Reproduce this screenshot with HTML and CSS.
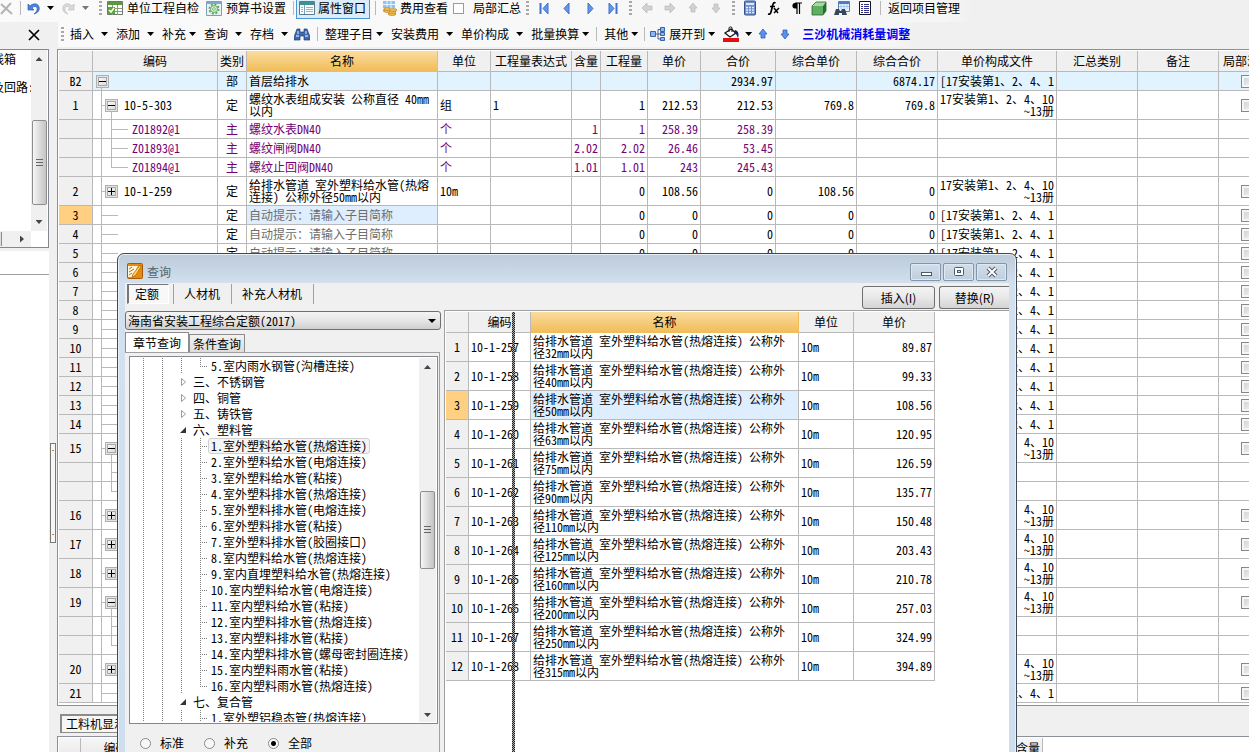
FILE: index.html
```html
<!DOCTYPE html>
<html lang="zh-CN">
<head>
<meta charset="utf-8">
<title>查询</title>
<link rel="stylesheet" href="styles.css">
</head>
<body>
<div class="app">
  <header class="topbar">
    <div class="toolbar">
      <button class="ib cut-left" aria-label="删除"><svg width="13" height="16" viewBox="0 0 13 16"><path d="M1 4 12 14M11 3 1 14" stroke="#b4b4b4" stroke-width="2" fill="none"/></svg></button>
      <i class="sep"></i>
      <button class="ib" aria-label="撤销"><svg width="16" height="16" viewBox="0 0 16 16"><path d="M2 4v6h6L6 8c3-3 6-1 5 2-.5 2-2 3-3 4 4-1 6-4 5-7-1-4-6-4-9-1z" fill="#4a82e0" stroke="#2c5cb8" stroke-width=".7"/></svg></button>
      <i class="arrow undo-arrow"></i>
      <button class="ib" aria-label="恢复"><svg width="16" height="16" viewBox="0 0 16 16"><path d="M14 4v6H8l2-2C7 5 4 7 5 10c.5 2 2 3 3 4-4-1-6-4-5-7 1-4 6-4 9-1z" fill="#dadada" stroke="#bdbdbd" stroke-width=".7"/></svg></button>
      <i class="arrow undo-arrow pale"></i>
      <i class="grip"></i>
      <button class="tb"><svg width="16" height="16" viewBox="0 0 16 16"><path d="M.5 1.500h15v13H.5z" fill="#fff" stroke="#6b7b6b"/><path d="M1 2h14v3H1z" fill="#5b9a3c"/><path d="M1 8.500h14M1 11.500h14M5.500 5v10M10.500 5v10" stroke="#8a9a8a"/><path d="M1 7h7v7H1z" fill="#58a530"/><path d="m2 10 2 2 3-4" stroke="#fff" stroke-width="1.600" fill="none"/></svg>单位工程自检</button>
      <button class="tb"><svg width="16" height="16" viewBox="0 0 16 16"><path d="M.5 1.500h15v14H.5z" fill="#e9f1f6" stroke="#7f9fb6"/><path d="M1 2h14v2H1z" fill="#7fa9d4"/><circle cx="8" cy="9" r="4.500" fill="none" stroke="#58a858" stroke-width="2" stroke-dasharray="2 1.500"/><circle cx="8" cy="9" r="3.500" fill="#d6ecd2" stroke="#6fb06f"/><circle cx="8" cy="9" r="1.300" fill="#fff" stroke="#4f9b4f" stroke-width=".7"/></svg>预算书设置</button>
      <i class="sep near"></i>
      <button class="tb active"><svg width="16" height="16" viewBox="0 0 16 16"><path d="M.5 1.500h15v13H.5z" fill="#f8fcff" stroke="#5b7c8c"/><path d="M1 2h14v3H1z" fill="#3f8f93"/><path d="M5.500 5v9" stroke="#7aa0b8"/><path d="M2 7.500h2M2 9.500h2M2 11.500h2M7 7.500h7M7 9.500h7M7 11.500h7" stroke="#84b5d4"/></svg>属性窗口</button>
      <i class="sep after"></i>
      <button class="tb fee"><svg width="16" height="16" viewBox="0 0 16 16"><path d="M1 1h12v11H1z" fill="#8cc4ee"/><path d="M1 4.500h12M1 8.500h12M5 1v11M9 1v11" stroke="#e8f5ff"/><g fill="#f0bb52" stroke="#b97e22" stroke-width=".6"><ellipse cx="10" cy="14" rx="4" ry="1.500"/><ellipse cx="10" cy="12" rx="4" ry="1.500"/><ellipse cx="11" cy="10" rx="4" ry="1.500"/><ellipse cx="5" cy="11" rx="3" ry="1.500"/><ellipse cx="5" cy="9" rx="3" ry="1.500"/></g></svg>费用查看</button>
      <label class="tcheck"><input type="checkbox">局部汇总</label>
      <i class="grip"></i>
      <button class="ib n1" aria-label="首条"><svg width="14" height="16" viewBox="0 0 14 16"><path d="M3.500 3v11" stroke="#3f72cf" stroke-width="2"/><path d="M11 3v11L6 8.500z" fill="#6496ea" stroke="#3f72cf"/></svg></button>
      <button class="ib n1" aria-label="上一条"><svg width="14" height="16" viewBox="0 0 14 16"><path d="M9 3v11L4 8.500z" fill="#6496ea" stroke="#3f72cf"/></svg></button>
      <button class="ib n1" aria-label="下一条"><svg width="14" height="16" viewBox="0 0 14 16"><path d="M5 3v11l5-5.500z" fill="#6496ea" stroke="#3f72cf"/></svg></button>
      <button class="ib n1" aria-label="末条"><svg width="14" height="16" viewBox="0 0 14 16"><path d="M10.500 3v11" stroke="#3f72cf" stroke-width="2"/><path d="M3 3v11l5-5.500z" fill="#6496ea" stroke="#3f72cf"/></svg></button>
      <i class="grip"></i>
      <button class="ib n1" aria-label="左移"><svg width="14" height="16" viewBox="0 0 14 16"><path d="m2 8 5-5v3h5v4H7v3z" fill="#d2d2d2" stroke="#b8b8b8" stroke-width=".7"/></svg></button>
      <button class="ib n1" aria-label="右移"><svg width="14" height="16" viewBox="0 0 14 16"><path d="M12 8 7 3v3H2v4h5v3z" fill="#d2d2d2" stroke="#b8b8b8" stroke-width=".7"/></svg></button>
      <button class="ib n1" aria-label="上移"><svg width="14" height="16" viewBox="0 0 14 16"><path d="m7 3 4 5H9v4H5V8H3z" fill="#d2d2d2" stroke="#b8b8b8" stroke-width=".7"/></svg></button>
      <button class="ib n1" aria-label="下移"><svg width="14" height="16" viewBox="0 0 14 16"><path d="m7 13 4-5H9V4H5v4H3z" fill="#d2d2d2" stroke="#b8b8b8" stroke-width=".7"/></svg></button>
      <i class="grip"></i>
      <button class="ib n1" aria-label="计算器"><svg width="14" height="16" viewBox="0 0 14 16"><rect x="1.500" y="1" width="11" height="14" rx="1" fill="#6f8fd0" stroke="#37528e"/><path d="M3 3h8v2H3z" fill="#dbe8fb"/><path d="M3 7.500h8M3 10h8M3 12.500h8" stroke="#e4ecfa" stroke-width="1.500" stroke-dasharray="2 1"/></svg></button>
      <button class="ib n1" aria-label="函数"><svg width="14" height="16" viewBox="0 0 14 16"><path d="M9.500 3C7.500 2 7 4 6.500 6L5 12c-.5 2-1.500 2.500-3 2M4 6.500h5" stroke="#000" stroke-width="1.700" fill="none"/><path d="m8 8 4 5M13 8l-5 5" stroke="#000" stroke-width="1.500"/></svg></button>
      <button class="ib n1" aria-label="段落"><svg width="14" height="16" viewBox="0 0 14 16"><path d="M8 3v11M10.500 3v11M6 3h7" stroke="#000" stroke-width="1.200"/><path d="M8 3H6C2.500 3 2.500 8.500 6 8.500h2z"/></svg></button>
      <button class="ib n1" aria-label="模型"><svg width="16" height="16" viewBox="0 0 16 16"><path d="M1 6 5 2h10l-3 4z" fill="#a4dba0"/><path d="M1 6h11v9H1z" fill="#5fae62"/><path d="m12 6 3-4v9l-3 4z" fill="#276e2c"/><path d="M1 6 5 2h10v9l-3 4H1z" fill="none" stroke="#286b2d" stroke-width=".8"/></svg></button>
      <button class="ib n1" aria-label="查找"><svg width="16" height="16" viewBox="0 0 16 16"><path d="M4.500 1.500h11v10h-11z" fill="#eaf3ff" stroke="#5c7cab"/><path d="M5 2h10v2H5z" fill="#4d7ac4"/><path d="M7 4v5M10 4v5M13 4v5M5 6.500h10" stroke="#a9c4e8"/><path d="m0 15 2-6h3l1 2h1l1-2h3l2 6H8v-2H5v2z" fill="#37465e"/></svg></button>
      <button class="ib n1" aria-label="报表"><svg width="14" height="16" viewBox="0 0 14 16"><path d="M1.500 1.500h11v13h-11z" fill="#fff" stroke="#112"/><path d="M3 4.500h2M3 6.500h2M3 8.500h2M3 10.500h2M3 12.500h2M6 4.500h5M6 6.500h5M6 8.500h5M6 10.500h5M6 12.500h5" stroke="#2f2f8a"/></svg></button>
      <i class="sep near2"></i>
      <button class="tb">返回项目管理</button>
    </div>
    <div class="second">
      <div class="panel-close"><button class="ib" aria-label="关闭"><svg width="12" height="12" viewBox="0 0 12 12"><path d="m1 1 10 10M11 1 1 11" stroke="#000" stroke-width="1.700"/></svg></button></div>
      <div class="toolbar menu">
        <i class="grip"></i>
        <button class="mb">插入<i class="arrow"></i></button>
        <button class="mb">添加<i class="arrow"></i></button>
        <button class="mb tight">补充<i class="arrow"></i></button>
        <button class="mb">查询<i class="arrow"></i></button>
        <button class="mb archive">存档<i class="arrow"></i></button>
        <button class="ib" aria-label="查找"><svg width="16" height="16" viewBox="0 0 16 16"><path d="M3 3h3v3h4V3h3l3 8v3h-6v-4H6v4H0v-3z" fill="#3f68ad" stroke="#1f3d75" stroke-width=".7"/><path d="M2 10h3M11 10h3M4 5v3M12 5v3" stroke="#b8d0f4" stroke-width="1.300"/></svg></button>
        <i class="sep"></i>
        <button class="mb tight">整理子目<i class="arrow"></i></button>
        <button class="mb">安装费用<i class="arrow"></i></button>
        <button class="mb">单价构成<i class="arrow"></i></button>
        <button class="mb tight last">批量换算<i class="arrow"></i></button>
        <i class="sep"></i>
        <button class="mb tight last">其他<i class="arrow"></i></button>
        <i class="sep slim"></i>
        <button class="mb tight"><svg width="16" height="16" viewBox="0 0 16 16"><path d="M6 8h4M8 8V3.500h2M8 8v5h2" stroke="#445f8c" fill="none"/><path d="M.5 5.500h5v5h-5zM10.500 1.500h4v4h-4zM10.500 6.500h4v3h-4zM10.500 11.500h4v3h-4z" fill="#8fb4ee" stroke="#3862a6"/></svg><span>展开到</span><i class="arrow"></i></button>
        <button class="mb paint" aria-label="填充颜色"><svg width="16" height="16" viewBox="0 0 16 16"><path d="m2 7 6-4 5 4-6 4z" fill="#fff" stroke="#111" stroke-width="1.300"/><path d="M6 6V2c0-1.500 3-1.500 3 0v4" fill="none" stroke="#111"/><path d="M12 4c4 1 4 5 3 8-1-2-1-4-4-5z" fill="#101f6b"/><path d="M0 12h16v4H0z" fill="#e01010"/></svg><i class="arrow"></i></button>
        <button class="ib up" aria-label="上移"><svg width="10" height="12" viewBox="0 0 10 12"><path d="m5 1 4 5H7v4H3V6H1z" fill="#5a92ea" stroke="#2a5fc0" stroke-width=".8"/></svg></button>
        <button class="ib up" aria-label="下移"><svg width="10" height="12" viewBox="0 0 10 12"><path d="m5 11 4-5H7V2H3v4H1z" fill="#5a92ea" stroke="#2a5fc0" stroke-width=".8"/></svg></button>
        <a class="adjust" href="#">三沙机械消耗量调整</a>
      </div>
    </div>
  </header>
  <div class="work">
    <aside class="side">
      <div class="side-panel">
        <div class="side-row">
          <div class="side-text"><p>线箱</p><p>及回路:</p></div>
          <div class="vbar"><i class="tri up-tri"></i><div class="thumb"></div><i class="tri down-tri"></i></div>
        </div>
        <div class="hbar"><i class="hthumb"></i><i class="tri right-tri"></i></div>
      </div>
      <div class="side-blank"></div>
      <div class="side-rest"></div>
    </aside>
    <div class="splitter"><div class="handle"><span>.</span><span>.</span></div></div>
    <main class="main">
      <div class="grid">
        <table class="sheet" id="sheet">
          <colgroup><col class="w34"><col class="w125"><col class="w29"><col class="w191"><col class="w53"><col class="w81"><col class="w29"><col class="w47"><col class="w53"><col class="w75"><col class="w81"><col class="w81"><col class="w119"><col class="w81"><col class="w81"><col class="w57"></colgroup>
          <thead><tr><th></th><th>编码</th><th>类别</th><th class="hot">名称</th><th>单位</th><th>工程量表达式</th><th>含量</th><th>工程量</th><th>单价</th><th>合价</th><th>综合单价</th><th>综合合价</th><th>单价构成文件</th><th>汇总类别</th><th>备注</th><th>局部汇总</th></tr></thead>
          <tbody></tbody>
        </table>
      </div>
      <div class="bottom-tabs"><button class="btab">工料机显示</button></div>
      <div class="bottom-grid">
        <table class="sheet lower"><thead><tr><th class="w22"></th><th class="w70">编码</th><th></th><th class="w29">含量</th></tr></thead></table>
      </div>
    </main>
  </div>

  <section class="dialog" role="dialog" aria-label="查询">
    <div class="title">
      <svg width="16" height="16" viewBox="0 0 16 16"><rect x=".5" y=".5" width="15" height="15" rx="1" fill="#e88a10" stroke="#a65a08"/><path d="M1 3h10l-2 4 2 2-5 5H1z" fill="#fff8e0"/><path d="m2 6 3-2M2 9l5-3M2 12l3-2" stroke="#c06a10"/><path d="m13 2-7 9-1 3 3-1 6-9z" stroke="#a85a08" stroke-width=".7" fill="#ffd35a"/></svg>
      <span>查询</span>
      <div class="winbtns">
        <button aria-label="最小化"><svg width="14" height="12" viewBox="0 0 14 12"><rect x="2.500" y="6.500" width="10" height="3" fill="#fff" stroke="#4d5a68"/></svg></button>
        <button aria-label="最大化"><svg width="14" height="12" viewBox="0 0 14 12"><rect x="2.500" y="1.500" width="9" height="8" rx="1" fill="#fff" stroke="#4d5a68"/><rect x="5.500" y="4.500" width="3" height="2" fill="#cfdbe8" stroke="#4d5a68"/></svg></button>
        <button aria-label="关闭"><svg width="14" height="12" viewBox="0 0 14 12"><path d="m3 2 8 8M11 2 3 10" stroke="#4d5a68" stroke-width="4"/><path d="m3 2 8 8M11 2 3 10" stroke="#fff" stroke-width="2"/></svg></button>
      </div>
    </div>
    <div class="content">
      <div class="modes">
        <button class="mode pressed">定额</button><button class="mode">人材机</button><button class="mode">补充人材机</button>
        <div class="actions"><button>插入(I)</button><button class="replace">替换(R)</button></div>
      </div>
      <div class="panes">
        <div class="left">
          <select class="combo" aria-label="定额库"><option>海南省安装工程综合定额(2017)</option></select>
          <div class="tabs"><button class="tab on">章节查询</button><button class="tab">条件查询</button></div>
          <div class="tabpane">
            <div class="treebox">
              <ul class="tree" id="tree"></ul>
              <div class="vbar"><i class="tri up-tri"></i><div class="thumb tree-thumb"></div><i class="tri down-tri"></i></div>
            </div>
            <div class="radios">
              <label><input type="radio" name="kind">标准</label>
              <label><input type="radio" name="kind">补充</label>
              <label><input type="radio" name="kind" checked>全部</label>
            </div>
          </div>
        </div>
        <div class="result">
          <table class="sheet quota" id="quota">
            <colgroup><col class="w23"><col class="w62"><col class="w268"><col class="w55"><col class="w81"></colgroup>
            <thead><tr><th></th><th>编码</th><th class="hot">名称</th><th>单位</th><th>单价</th></tr></thead>
            <tbody></tbody>
          </table>
          <div class="drag-line"></div>
        </div>
      </div>
    </div>
  </section>
</div>
<script src="app.js"></script>
</body>
</html>
```
FILE: styles.css
```css
* { box-sizing: border-box; }
html, body { margin: 0; height: 100%; overflow: hidden; }
body, button, input, select {
  font-family: "Noto Sans Mono CJK SC", "Noto Sans CJK SC", sans-serif;
  font-size: 12px;
  line-height: 12px;
  color: #000;
}
button { border: 0; background: none; padding: 0; margin: 0; white-space: nowrap; flex: none; }
.app { position: relative; height: 100vh; overflow: hidden; background: #f0f0f0; display: flex; flex-direction: column; }

/* toolbars */
.topbar { flex: none; }
.toolbar { display: flex; align-items: center; width: max-content; background: linear-gradient(90deg, #fafafa, #f6f6f6 97%, #f0f0f0); white-space: nowrap; }
.topbar > .toolbar { height: 22px; padding: 0 6px 6px 0; }
.second { display: flex; height: 27px; }
.panel-close { width: 58px; padding: 7px 0 0 28px; flex: none; }
.menu { height: 25px; padding: 0 6px 1px 2px; }
.ib { display: inline-flex; align-items: center; justify-content: center; }
.tb { display: inline-flex; align-items: center; gap: 4px; height: 20px; margin-right: 7px; }
.tb.active { border: 1px solid #4a96d8; background: #dcecf9; padding: 0 3px 0 2px; gap: 3px; margin: 0; height: 22px; }
.tb.fee { gap: 2px; margin-right: 5px; }
.cut-left { margin-right: 1px; }
.sep { flex: none; width: 1px; height: 14px; background: #b9b9b9; margin: 0 7px; }
.cut-left + .sep { margin: 0 5px 0 6px; }
.sep.near { margin: 0 2px 0 0; }
.sep.after { margin: 0 6px 0 5px; }
.sep.near2 { margin: 0 7px 0 4px; }
.sep.slim { margin: 0 5px 0 6px; }
.grip { flex: none; width: 3px; height: 15px; margin: 0 3px 0 5px; background: repeating-linear-gradient(#a8a8a8 0 2px, transparent 2px 4px); }
.menu .grip { margin: 0 6px 0 1px; }
.arrow { flex: none; width: 7px; height: 4px; background: #000; clip-path: polygon(0 0, 100% 0, 50% 100%); }
.arrow.pale { background: #777; }
.undo-arrow { margin: 0 6px 0 5px; }
.undo-arrow.pale { margin: 0 5px 0 6px; }
.undo-arrow.pale + .grip { margin-right: 5px; }
.tcheck { display: flex; align-items: center; gap: 9px; margin-right: 0; }
.tcheck input { appearance: none; width: 11px; height: 11px; margin: 0; border: 1px solid #9a9a9a; background: #fdfdfd; }
.n1 { width: 23px; }
.mb { display: inline-flex; align-items: center; gap: 7px; margin-right: 8px; }
.mb.tight { gap: 3px; }
.mb.tight.last { margin-right: 0; }
.mb.archive { margin-right: 6px; }
.mb.paint { gap: 6px; margin-right: 0; }
.up { width: 22px; }
.adjust { color: #0000f0; font-weight: bold; text-decoration: none; margin-left: 6px; }

/* workspace */
.work { flex: 1; display: flex; min-height: 0; }
.side { width: 49px; flex: none; display: flex; flex-direction: column; }
.side-panel { background: #fff; border: solid #828790; border-width: 1px 1px 1px 0; height: 199px; display: flex; flex-direction: column; }
.side-row { display: flex; flex: 1; }
.side-text { width: 31px; overflow: hidden; display: flex; flex-direction: column; align-items: flex-start; gap: 16px; padding-top: 3px; }
.side-text p { margin: 0 0 0 -8px; white-space: nowrap; }
.vbar { width: 16px; background: #f0f0f0; display: flex; flex-direction: column; align-items: center; padding: 7px 0; flex: none; }
.thumb { flex: none; width: 15px; height: 85px; border: 1px solid #8e8e8e; border-radius: 2px; background: linear-gradient(90deg, #f6f6f6, #dcdcdc 50%, #c4c4c4); display: flex; align-items: center; justify-content: center; margin: 59px 0 auto; }
.thumb::after { content: ""; width: 7px; height: 8px; background: repeating-linear-gradient(#666 0 1px, transparent 1px 3px); }
.tri { width: 7px; height: 4px; background: #444; flex: none; }
.up-tri { clip-path: polygon(50% 0, 100% 100%, 0 100%); }
.down-tri { clip-path: polygon(0 0, 100% 0, 50% 100%); }
.right-tri { width: 4px; height: 7px; clip-path: polygon(0 0, 100% 50%, 0 100%); }
.hbar { height: 16px; margin-right: 17px; background: #f0f0f0; display: flex; align-items: center; justify-content: space-between; padding-right: 7px; }
.hthumb { width: 2px; height: 14px; background: #ddd; border-right: 1px solid #8e8e8e; }
.side-blank { height: 24px; margin-top: 3px; background: #fff; border-bottom: 1px solid #a0a0a0; }
.side-rest { flex: 1; background: #fff; }
.splitter { width: 8px; flex: none; display: flex; flex-direction: column; }
.handle { margin: 394px 1px 0; height: 100px; border: 1px solid #777; background: #f6f6f6; display: flex; flex-direction: column; justify-content: space-between; align-items: center; font-size: 8px; line-height: 8px; padding-bottom: 6px; }
.main { flex: 1; min-width: 0; display: flex; flex-direction: column; }
.grid { flex: none; background: #fff; border: solid #8c9199; border-width: 1px 0 1px 1px; padding: 1px 0 2px 1px; overflow: hidden; }

/* tables */
.sheet { table-layout: fixed; border-collapse: separate; border-spacing: 0; width: 1217px; }
.sheet th, .sheet td { border: solid #b9b9b9; border-width: 0 1px 1px 0; padding: 0 2px; height: 19px; overflow: hidden; white-space: nowrap; vertical-align: middle; }
.sheet thead th { height: 21px; font-weight: normal; background: #f0f0f0; text-align: center; padding: 0; }
.sheet thead th.hot { background: linear-gradient(#fbdca0, #f1bd58); border-color: #f1bd58; }
.sheet .tall td, .sheet .tall th { height: 29px; }
.sheet tbody th { font-weight: normal; background: #f0f0f0; }
.sheet tbody th.cur { background: #ffcf82; }
.sheet .num { text-align: right; }
.sheet .mid { text-align: center; }
.sheet .right { text-align: right; }
.sheet td.sel { background: #deeeff; }
.sheet .part td { background-color: #e1f3ff; }
.hint { color: #6d6d6d; }
.sub td { color: #740074; }
.w22 { width: 22px; }
.w23 { width: 23px; }
.w29 { width: 29px; }
.w34 { width: 34px; }
.w47 { width: 47px; }
.w53 { width: 53px; }
.w55 { width: 55px; }
.w57 { width: 57px; }
.w62 { width: 62px; }
.w70 { width: 70px; }
.w75 { width: 75px; }
.w81 { width: 81px; }
.w119 { width: 119px; }
.w125 { width: 125px; }
.w191 { width: 191px; }
.w268 { width: 268px; }
.code { background-repeat: no-repeat; --l: linear-gradient(#b9b9b9, #b9b9b9); }
.code .wrap { display: flex; align-items: center; gap: 6px; }
.sheet .code.root { padding-left: 3px; background-image: var(--l); background-position: 8px 100%; background-size: 1px 50%; }
.sheet .code.node { padding-left: 12px; background-image: var(--l), var(--l); background-position: 8px 0, 8px 50%; background-size: 1px 100%, 6px 1px; }
.sheet .code.open { background-image: var(--l), var(--l), var(--l); background-position: 8px 0, 8px 50%, 18px 100%; background-size: 1px 100%, 6px 1px, 1px 50%; }
.sheet .code.leaf { background-image: var(--l), var(--l); background-position: 8px 0, 8px 50%; background-size: 1px 100%, 17px 1px; }
.sheet .code.child { padding-left: 39px; background-image: var(--l), var(--l), var(--l); background-position: 8px 0, 18px 0, 18px 50%; background-size: 1px 100%, 1px 100%, 17px 1px; }
.sheet .code.end { background-size: 1px 100%, 1px 50%, 17px 1px; }
.exp { width: 13px; height: 13px; border: 1px solid #b0b0b0; background: linear-gradient(135deg, #fff, #d4d4d4); box-shadow: inset 0 0 0 1px #e4e4e4, inset 0 0 0 2px #a8a8a8; position: relative; }
.exp::before, .exp.plus::after { content: ""; position: absolute; left: 2px; top: 5px; width: 7px; height: 1px; background: #000; }
.exp.plus::after { left: 5px; top: 2px; width: 1px; height: 7px; }
.cell-check { appearance: none; display: block; width: 13px; height: 13px; margin: 0 auto; border: 1px solid #888; background: linear-gradient(135deg, #c9ced4, #f6f6f6); box-shadow: inset 0 0 0 2px #f5f5f5; }

.bottom-tabs { flex: none; height: 30px; padding: 8px 0 0 3px; }
.btab { background: #f6f6f6; border: solid #8c8c8c; border-width: 2px 1px 1px 2px; padding: 0 6px 0 4px; height: 19px; }
.bottom-grid { flex: 1; background: #fff; border: solid #8c9199; border-width: 1px 0 0 1px; padding: 1px 0 0 1px; overflow: hidden; }
.sheet.lower { width: 984px; }
.sheet.lower th { background: linear-gradient(#f6f6f6, #e8e8e8); }

/* query window */
.dialog { position: absolute; left: 117px; top: 253px; width: 900px; bottom: -8px; border: 1px solid #3f4856; border-radius: 7px 7px 0 0; background: linear-gradient(#bccbd9, #d3e0ee 30px, #cfdeee); padding: 0 7px; display: flex; flex-direction: column; box-shadow: inset 0 0 0 1px #e8f0f8; }
.title { height: 29px; padding: 9px 2px 0; display: flex; gap: 4px; align-items: flex-start; flex: none; }
.title span { color: #52656f; padding-top: 3px; }
.winbtns { margin-left: auto; display: flex; gap: 2px; }
.winbtns button { width: 31px; height: 18px; border: 1px solid #8495aa; border-radius: 2px; background: linear-gradient(#d2deea, #bfcedd); box-shadow: inset 0 0 0 1px #dfe9f3; display: flex; align-items: center; justify-content: center; }
.content { flex: 1; min-height: 0; background: #f0f0f0; display: flex; flex-direction: column; }
.modes { height: 27px; display: flex; align-items: flex-start; padding: 1px 0 0 2px; flex: none; }
.mode { height: 20px; padding: 0 11px 0 10px; border-right: 1px solid #a0a0a0; }
.mode.pressed { width: 42px; padding: 0 3px 0 0; border: solid #777; border-width: 1px 1px 1px 2px; border-right-color: #fff; border-bottom-color: #fff; background: #f8f8f8; margin-right: 4px; }
.mode.pressed + .mode { border-left: 1px solid #a0a0a0; }
.actions { margin-left: auto; display: flex; gap: 4px; padding-top: 2px; }
.actions button { width: 73px; height: 23px; border: 1px solid #707070; border-radius: 3px; background: linear-gradient(#f4f4f4, #e8e8e8 50%, #d4d4d4); font-family: "Noto Sans CJK SC", sans-serif; }
.actions .replace { width: 70px; border-right: 0; border-radius: 3px 0 0 3px; }
.panes { flex: 1; display: flex; min-height: 0; }
.left { position: relative; width: 316px; flex: none; display: flex; flex-direction: column; padding-top: 1px; }
.left::after { content: ""; position: absolute; right: 5px; top: 9px; width: 8px; height: 4px; background: #000; clip-path: polygon(0 0, 100% 0, 50% 100%); pointer-events: none; }
.combo { appearance: none; width: 100%; height: 19px; border: 1px solid #707070; border-radius: 3px; padding: 0 2px; flex: none; background: linear-gradient(#f4f4f4, #e6e6e6 50%, #cfcfcf); }
.tabs { display: flex; align-items: flex-end; height: 22px; flex: none; }
.tab { width: 56px; height: 18px; border: 1px solid #8c8c8c; border-bottom: 0; background: linear-gradient(#f2f2f2, #dcdcdc); }
.tab.on { width: 64px; height: 20px; background: #fff; }
.tabpane { flex: 1; min-height: 0; display: flex; flex-direction: column; border: solid #a0a0a0; border-width: 1px 1px 0 0; margin-right: 1px; padding: 3px 1px 0 4px; }
.treebox { display: flex; height: 368px; flex: none; border: 1px solid #828790; background: #fff; padding: 1px; overflow: hidden; }
.tree { --d: repeating-linear-gradient(#808080 0 1px, transparent 1px 2px); list-style: none; margin: 0; padding: 0; flex: 1; overflow: hidden; }
.tree li { height: 16px; display: flex; align-items: center; white-space: nowrap; background-image: var(--d), var(--d), var(--d), var(--d); background-position: 12px 0, 31px 0, 50px 0, 69px 0; background-size: 1px 100%; background-repeat: no-repeat; }
.tree .item { padding-left: 69px; }
.tree .item::before { content: ""; width: 8px; height: 1px; background: repeating-linear-gradient(90deg, #808080 0 1px, transparent 1px 2px); }
.tree .group { background-size: 1px 100%, 1px 100%, 0 0, 0 0; padding-left: 48px; }
.tree .tail { background-size: 1px 100%, 1px 100%, 1px 100%, 1px 8px; }
.tree .item span { padding: 1px 2px; border: 1px solid transparent; }
.tree .item .picked { border-color: #d0d0d0; border-radius: 3px; background: #f4f4f4; }
.tree .group span { padding-left: 5px; }
.treebox .vbar { padding: 7px 0 5px; width: 17px; }
.treebox .tree-thumb { height: 78px; margin-top: 122px; }
.radios { display: flex; gap: 20px; padding: 13px 0 0 11px; }
.radios label { display: flex; align-items: center; gap: 9px; }
.radios input { appearance: none; width: 11px; height: 11px; margin: 0; border: 1px solid #8a8a8a; border-radius: 50%; background: #f8f8f8; }
.radios input:checked { background: radial-gradient(#000 0 2px, #f8f8f8 3px); }
.result { position: relative; flex: 1; margin-left: 3px; background: #fff; border: solid #a0a0a0; border-width: 1px 0 0 1px; padding: 1px 0 0 1px; }
.sheet.quota { width: 489px; }
.drag-line { position: absolute; left: 67px; top: 1px; bottom: 0; width: 3px; background: repeating-conic-gradient(#222 0 25%, #aaa 0 50%) 0 0 / 2px 2px; }
```
FILE: app.js
```js
const flat = '[17安装第1、2、4、1';
const tallFile = '17安装第1、2、4、10<br>~13册';
const none = ['', '', '', '', '', '', '', ''];
const zeros = ['', '', '', '0', '0', '0', '0', '0'];
const hint = '<span class="hint">自动提示：请输入子目简称</span>';
const empty = (n, filled) => ({ n, kind: 'leaf', type: filled ? '定' : '', name: filled ? hint : '', v: filled ? zeros : none, file: flat });
const item = (n, kind, code, name, v) => ({ n, kind, code, type: code ? '定' : '', name, v, file: tallFile, tall: true });
const child = (code, name, v, end) => ({ n: '', kind: end ? 'child end' : 'child', code, type: code ? '主' : '', name, v, file: '', sub: true });

const rows = [
  { n: 'B2', kind: 'root', type: '部', name: '首层给排水', v: ['', '', '', '', '', '2934.97', '', '6874.17'], file: flat, part: true },
  item('1', 'node open', '10-5-303', '螺纹水表组成安装 公称直径 40mm<br>以内', ['组', '1', '', '1', '212.53', '212.53', '769.8', '769.8']),
  child('Z01892@1', '螺纹水表DN40', ['个', '', '1', '1', '258.39', '258.39', '', '']),
  child('Z01893@1', '螺纹闸阀DN40', ['个', '', '2.02', '2.02', '26.46', '53.45', '', '']),
  child('Z01894@1', '螺纹止回阀DN40', ['个', '', '1.01', '1.01', '243', '245.43', '', ''], true),
  item('2', 'node', '10-1-259', '给排水管道 室外塑料给水管(热熔<br>连接) 公称外径50mm以内', ['10m', '', '', '0', '108.56', '0', '108.56', '0'])
];
for (let i = 3; i <= 14; i++) rows.push(empty(String(i), i <= 5));
rows.push(item('15', 'node open', '', '', none), child('', '', none), child('', '', none, true));
['16', '17', '18'].forEach((n) => rows.push(item(n, 'node', '', '', none)));
rows.push(item('19', 'node open', '', '', none), child('', '', none), child('', '', none, true));
rows.push(item('20', 'node', '', '', none), empty('21', false));

document.querySelector('#sheet tbody').innerHTML = rows.map((r) => {
  const box = r.kind === 'root' || r.kind.startsWith('node')
    ? `<button class="exp ${r.kind === 'node' ? 'plus' : ''}" aria-label="展开"></button>` : '';
  const cls = [r.tall && 'tall', r.sub && 'sub', r.part && 'part'].filter(Boolean).join(' ');
  const cells = r.v.map((t, i) => `<td class="${i > 1 ? 'num' : ''}">${t}</td>`).join('');
  const check = r.sub ? '' : '<input type="checkbox" class="cell-check" aria-label="局部汇总">';
  return `<tr class="${cls}"><th class="${r.n === '3' ? 'cur' : ''}">${r.n}</th>` +
    `<td class="code ${r.kind}"><div class="wrap">${box}<span>${r.code || ''}</span></div></td>` +
    `<td class="mid">${r.type}</td><td class="${r.n === '3' ? 'sel' : ''}">${r.name}</td>${cells}` +
    `<td class="${r.tall ? 'right' : ''}">${r.file}</td><td></td><td></td><td>${check}</td></tr>`;
}).join('');

const closed = '<svg width="9" height="10" viewBox="0 0 9 10"><path d="M2.500 1.500v7l4-3.500z" fill="#fff" stroke="#999"/></svg>';
const opened = '<svg width="9" height="10" viewBox="0 0 9 10"><path d="M7 2v6H1z" fill="#333"/></svg>';
const nodes = [
  ['tail', '5.室内雨水钢管(沟槽连接)'],
  [closed, '三、不锈钢管'], [closed, '四、铜管'], [closed, '五、铸铁管'], [opened, '六、塑料管'],
  ['picked', '1.室外塑料给水管(热熔连接)'], ['', '2.室外塑料给水管(电熔连接)'], ['', '3.室外塑料给水管(粘接)'],
  ['', '4.室外塑料排水管(热熔连接)'], ['', '5.室外塑料排水管(电熔连接)'], ['', '6.室外塑料排水管(粘接)'],
  ['', '7.室外塑料排水管(胶圈接口)'], ['', '8.室内塑料给水管(热熔连接)'], ['', '9.室内直埋塑料给水管(热熔连接)'],
  ['', '10.室内塑料给水管(电熔连接)'], ['', '11.室内塑料给水管(粘接)'], ['', '12.室内塑料排水管(热熔连接)'],
  ['', '13.室内塑料排水管(粘接)'], ['', '14.室内塑料排水管(螺母密封圈连接)'], ['', '15.室内塑料雨水管(粘接)'],
  ['tail', '16.室内塑料雨水管(热熔连接)'], [opened, '七、复合管'], ['', '1.室外塑铝稳态管(热熔连接)']
];
document.querySelector('#tree').innerHTML = nodes.map(([k, t]) => k.startsWith('<')
  ? `<li class="group">${k}<span>${t}</span></li>`
  : `<li class="item ${k === 'tail' ? 'tail' : ''}"><span class="${k === 'picked' ? k : ''}">${t}</span></li>`).join('');

const sizes = [['32', '89.87'], ['40', '99.33'], ['50', '108.56'], ['63', '120.95'], ['75', '126.59'], ['90', '135.77'],
  ['110', '150.48'], ['125', '203.43'], ['160', '210.78'], ['200', '257.03'], ['250', '324.99'], ['315', '394.89']];
document.querySelector('#quota tbody').innerHTML = sizes.map(([d, p], i) =>
  `<tr class="tall"><th class="${i === 2 ? 'cur' : ''}">${i + 1}</th><td>10-1-${257 + i}</td>` +
  `<td class="${i === 2 ? 'sel' : ''}">给排水管道 室外塑料给水管(热熔连接) 公称外<br>径${d}mm以内</td><td>10m</td><td class="num">${p}</td></tr>`).join('');
```
